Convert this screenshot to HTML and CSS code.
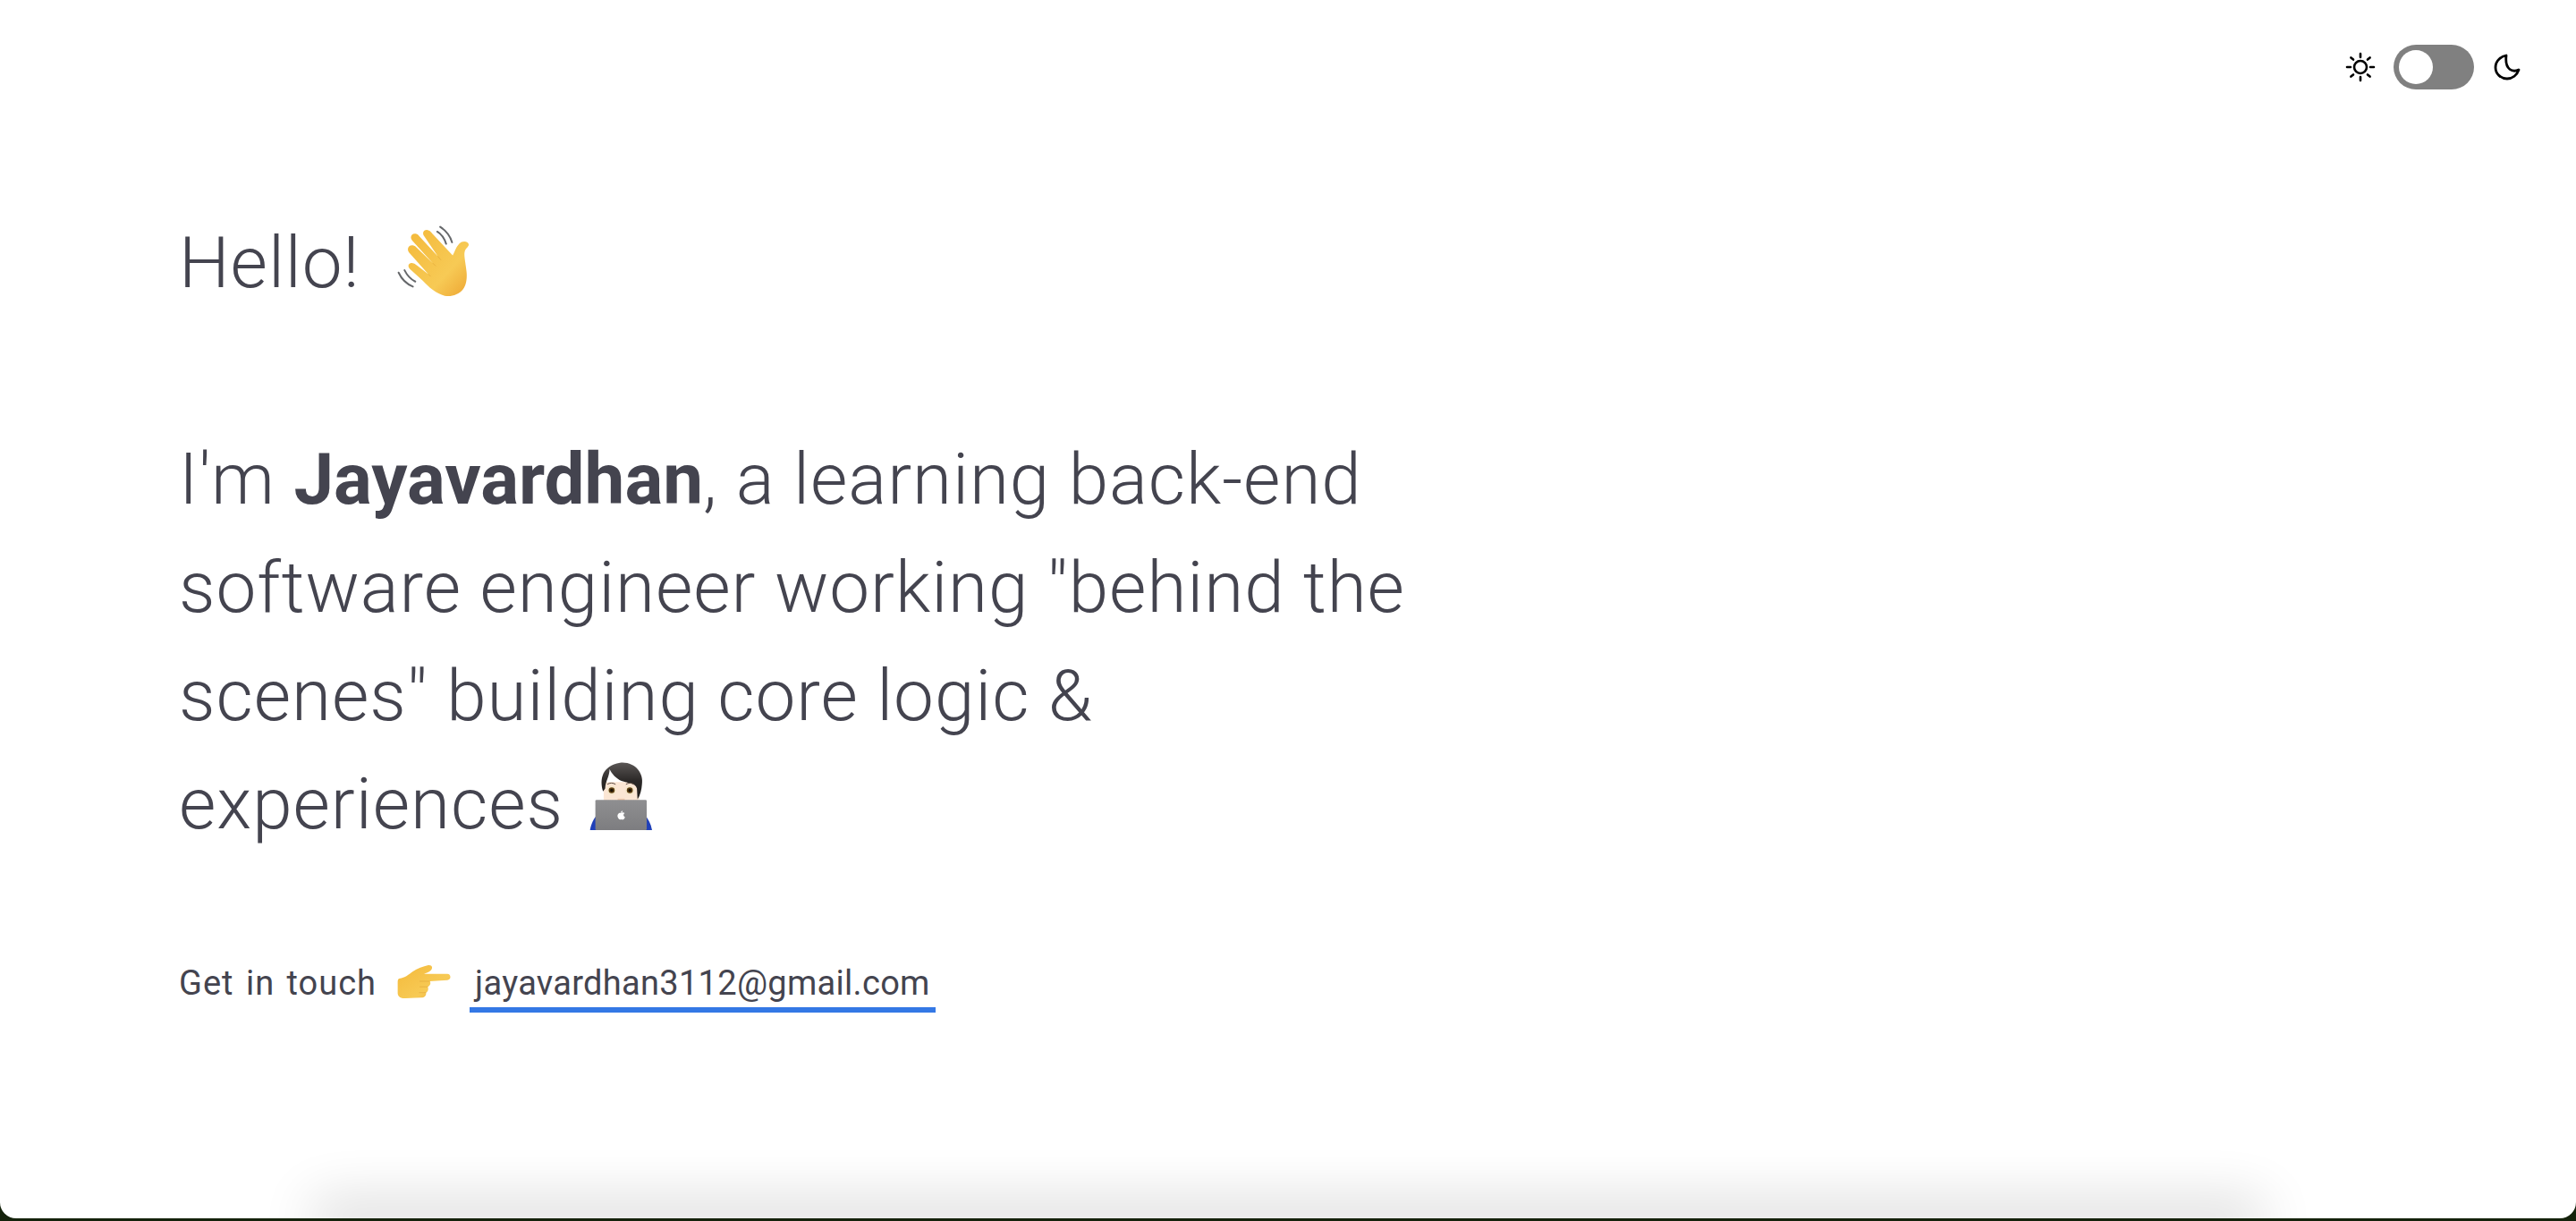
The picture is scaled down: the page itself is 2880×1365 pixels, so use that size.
FILE: index.html
```html
<!DOCTYPE html>
<html lang="en">
<head>
    <meta charset="UTF-8">
    <title>Jayavardhan</title>
    <link rel="stylesheet" href="styles.css">
</head>
<body>
    <svg class="defs" width="0" height="0">
        <defs>
            <linearGradient id="skin" x1="0" y1="0" x2="1" y2="1">
                <stop offset="0" stop-color="#f4b93a"/>
                <stop offset=".65" stop-color="#f7ca55"/>
                <stop offset="1" stop-color="#eda532"/>
            </linearGradient>
            <linearGradient id="hair" x1="0" y1="0" x2="0" y2="1">
                <stop offset="0" stop-color="#5a5655"/>
                <stop offset=".5" stop-color="#2b2827"/>
                <stop offset="1" stop-color="#1f1d1c"/>
            </linearGradient>
            <linearGradient id="lid" x1="0" y1="0" x2="0" y2="1">
                <stop offset="0" stop-color="#8f8f91"/>
                <stop offset="1" stop-color="#7d7d80"/>
            </linearGradient>
        </defs>
    </svg>
    <div class="window">
        <header class="topbar">
            <svg class="sun" viewBox="0 0 34 34" width="34" height="34" fill="none" stroke="#000" stroke-width="2.6" stroke-linecap="round">
                <circle cx="17" cy="17" r="7"/>
                <path d="M17 2v4M17 28v4M2 17h4M28 17h4M6.400 6.400l2.600 2.200M25 25.400l2.600 2.200M6.400 27.600l2.600-2.200M25 8.600l2.600-2.200"/>
            </svg>
            <div class="toggle"><span class="knob"></span></div>
            <svg class="moon" viewBox="0 0 30 30" width="30" height="30" fill="none" stroke="#000" stroke-width="2.8" stroke-linejoin="round">
                <path d="M14 2C9 3 2 7 2 15.500C2 22.500 8 28 15 28C21 28 26 24 28 18C22 21 12 19 14 2Z"/>
            </svg>
        </header>
        <main class="intro">
            <p class="hello">Hello!
                <svg class="emoji wave" viewBox="40 25 260 250">
                    <g fill="none" stroke="#66686b" stroke-width="6" stroke-linecap="round">
                        <path d="M180 52C197 62 205 78 210 93M190 36C212 50 224 68 230 88M50 190C60 212 76 228 98 237M70 182C78 198 90 212 106 220"/>
                    </g>
                    <path fill="url(#skin)" d="M205 268C178 262 150 238 132 218L88 178C78 168 84 156 97 158C103 158 107 162 112 166L150 195L85 122C76 110 84 96 98 98C104 99 108 103 112 107L165 158L96 82C86 70 94 56 108 59C113 60 117 64 120 68L182 135L134 64C128 52 140 42 152 48C157 50 160 54 163 58L232 132C240 118 246 96 262 87C272 82 287 86 286 97C285 104 274 108 272 122C270 136 276 160 279 190C281 215 276 238 262 252C248 266 225 272 205 268Z"/>
                    <path fill="none" stroke="#d99a30" stroke-width="2" opacity=".7" d="M150 195L158 203M165 158L175 168M182 135L193 148"/>
                </svg>
            </p>
            <p class="about">I'm <strong>Jayavardhan</strong>, a learning back-end software engineer working "behind the scenes" building core logic &amp; experiences
                <svg class="emoji coder" viewBox="110 30 215 235">
                    <path fill="#2040b8" d="M114 262C118 240 126 222 140 210H296C310 222 319 240 323 262Z"/>
                    <path fill="#fbe6d4" d="M160 100H280V165H160Z"/>
                    <path fill="url(#hair)" d="M158 132C145 90 155 45 215 35C265 30 296 70 289 108C288 125 283 145 274 158L272 122C268 102 240 104 220 96C202 88 187 72 180 56C180 80 166 96 165 122Z"/>
                    <path fill="#f0c9ad" d="M207 156H231V165H207Z"/>
                    <circle cx="187" cy="128" r="15" fill="#f4e6c8"/>
                    <circle cx="248" cy="128" r="15" fill="#f4e6c8"/>
                    <circle cx="187" cy="128" r="10" fill="#5b3d12"/>
                    <circle cx="248" cy="128" r="10" fill="#5b3d12"/>
                    <circle cx="187" cy="128" r="5" fill="#1b1206"/>
                    <circle cx="248" cy="128" r="5" fill="#1b1206"/>
                    <path fill="none" stroke="#5a4a42" stroke-width="3" d="M172 108C180 102 192 102 200 108M235 108C243 102 255 102 263 108"/>
                    <rect x="132" y="160" width="173" height="102" rx="4" fill="url(#lid)"/>
                    <path fill="#fff" d="M218 204C223 201 228 202 231 205C225 208 226 216 232 218C229 226 225 228 219 226C213 228 209 224 207 217C205 208 212 202 218 204ZM218 203C218 199 221 197 224 197C224 200 222 203 218 203Z"/>
                </svg>
            </p>
            <p class="contact">
                <span class="touch">Get in touch</span>
                <svg class="emoji point" viewBox="30 36 190 122">
                    <path fill="url(#skin)" d="M40 88C62 84 72 74 86 64C102 54 122 46 140 42C153 40 157 52 148 60C142 66 132 68 125 72H205C219 72 219 93 205 93L145 97C150 104 146 112 138 116C142 124 138 134 132 136C134 146 126 153 116 153L62 155C46 156 36 150 35 138V102C35 94 36 90 40 88Z"/>
                    <path fill="none" stroke="#d99a30" stroke-width="2" opacity=".7" d="M110 97H145M110 116H138M108 136H132"/>
                </svg>
                <a class="mail" href="mailto:jayavardhan3112@gmail.com">jayavardhan3112@gmail.com</a>
            </p>
        </main>
        <div class="shade"></div>
    </div>
</body>
</html>
```

FILE: styles.css
```css
html, body {
    margin: 0;
    height: 100%;
}

body {
    background-color: #14220b;
    overflow: hidden;
    font-family: "Roboto", "Liberation Sans", sans-serif;
    color: #44444f;
}

.defs {
    display: block;
    height: 0;
}

.window {
    height: 1362px;
    background-color: #fff;
    border-radius: 0 0 18px 18px;
    overflow: hidden;
    display: flex;
    flex-direction: column;
}

.topbar {
    display: flex;
    justify-content: flex-end;
    align-items: center;
    padding: 50px 62px 0 0;
    height: 50px;
}

.sun {
    margin-right: 20px;
}

.toggle {
    width: 90px;
    height: 50px;
    box-sizing: border-box;
    padding: 6px;
    border-radius: 25px;
    background-color: #808080;
}

.knob {
    display: block;
    width: 38px;
    height: 38px;
    border-radius: 50%;
    background-color: #fff;
}

.moon {
    margin-left: 22px;
}

.intro {
    flex: 1;
    padding: 134px 0 0 200px;
    width: 1400px;
}

.intro p {
    margin: 0;
}

.hello,
.about {
    font-size: 80px;
    font-weight: 300;
    line-height: 121px;
    letter-spacing: 0.95px;
}

.intro .about {
    margin-top: 121px;
}

.about strong {
    font-weight: 700;
    letter-spacing: 0;
}

.emoji {
    display: inline-block;
}

.wave {
    width: 87px;
    height: 83px;
    margin-left: 19px;
    vertical-align: -12px;
}

.coder {
    width: 72px;
    height: 78px;
    margin-left: 8px;
    vertical-align: -3px;
}

.intro .contact {
    margin-top: 117px;
    display: flex;
    align-items: baseline;
    font-size: 38px;
}

.touch {
    letter-spacing: 1px;
    word-spacing: 3px;
}

.point {
    width: 62px;
    height: 40px;
    margin: 0 20px 26px 22px;
    align-self: center;
}

.mail {
    color: inherit;
    text-decoration: none;
    padding: 0 6px 5px;
    border-bottom: 6px solid #3478e5;
    letter-spacing: 0.3px;
}

.shade {
    height: 0;
    margin: 0 370px;
    box-shadow: 0 0 60px 20px rgba(0, 0, 0, 0.16);
}
```
